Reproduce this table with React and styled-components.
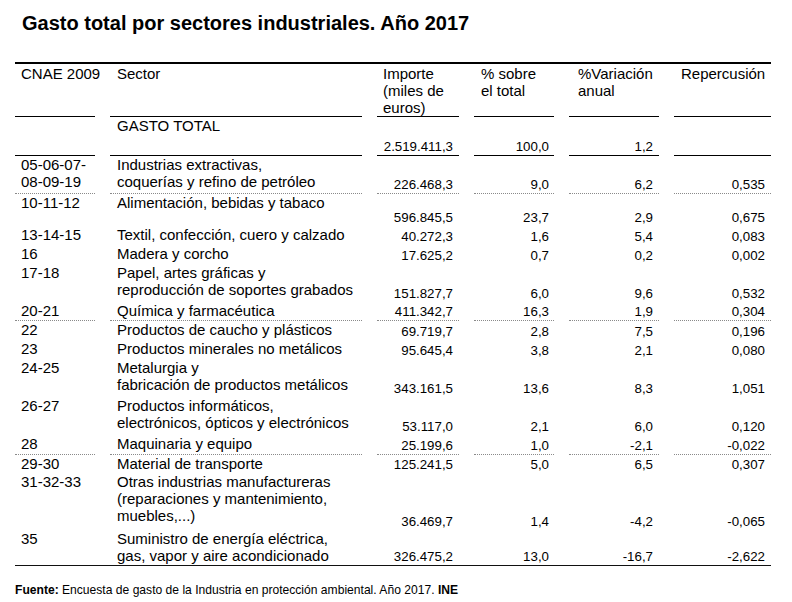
import React from 'react';
import styled, {createGlobalStyle} from 'styled-components';

const GlobalStyle = createGlobalStyle`
  body {
    margin: 0;
    background: #ffffff;
    color: #000000;
    font-family: "Liberation Sans", Arial, sans-serif;
  }
`

const Page = styled.div`
  width: 792px;
  height: 602px;
  padding: 12px 0 0 15px;
  box-sizing: border-box;
  overflow: hidden;
`

const Title = styled.h1`
  margin: 0 0 28px 7px;
  font-size: 20px;
  line-height: 22px;
  font-weight: bold;
`

const Table = styled.div`
  width: 756px;
  border-top: 2px solid #000;
  border-bottom: 1px solid #111;
`

const Row = styled.div`
  display: grid;
  grid-template-columns: 80px 252px 82px 80px 90px 97px;
  column-gap: 15px;
  font-size: 15px;
  line-height: 17px;

  & > div {
    border-bottom: ${props => props.$rule === 'solid' ? '1px solid #000'
            : props.$rule === 'dotted' ? '1px dotted #8a8a8a' : 'none'};
  }
`

const Head = styled.div`
  padding: 1px 0 0 ${props => props.$left || 6}px;
  white-space: nowrap;
`

const Code = styled.div`
  padding: 0 0 ${props => props.$shift}px 6px;
  white-space: nowrap;
`

const Label = styled.div`
  padding: 0 0 ${props => props.$shift}px 7px;
  white-space: nowrap;
`

const Num = styled.div`
  display: flex;
  align-items: flex-end;
  justify-content: flex-end;
  padding-right: ${props => props.$right || 6}px;
  font-size: 13.3px;
`

const Footer = styled.p`
  margin: 17px 0 0 0;
  font-size: 12.1px;
  line-height: 14px;

  b {
    font-weight: bold;
  }
`

const rows = [
    {code: [''], label: ['GASTO TOTAL'], values: ['2.519.411,3', '100,0', '1,2', ''], shift: 21, rule: 'solid'},
    {code: ['05-06-07-', '08-09-19'], label: ['Industrias extractivas,', 'coquerías y refino de petróleo'], values: ['226.468,3', '9,0', '6,2', '0,535'], shift: 3, rule: 'dotted'},
    {code: ['10-11-12'], label: ['Alimentación, bebidas y tabaco'], values: ['596.845,5', '23,7', '2,9', '0,675'], shift: 15},
    {code: ['13-14-15'], label: ['Textil, confección, cuero y calzado'], values: ['40.272,3', '1,6', '5,4', '0,083'], shift: 2},
    {code: ['16'], label: ['Madera y corcho'], values: ['17.625,2', '0,7', '0,2', '0,002'], shift: 2},
    {code: ['17-18'], label: ['Papel, artes gráficas y', 'reproducción de soportes grabados'], values: ['151.827,7', '6,0', '9,6', '0,532'], shift: 4},
    {code: ['20-21'], label: ['Química y farmacéutica'], values: ['411.342,7', '16,3', '1,9', '0,304'], shift: 1, rule: 'dotted'},
    {code: ['22'], label: ['Productos de caucho y plásticos'], values: ['69.719,7', '2,8', '7,5', '0,196'], shift: 2},
    {code: ['23'], label: ['Productos minerales no metálicos'], values: ['95.645,4', '3,8', '2,1', '0,080'], shift: 2},
    {code: ['24-25'], label: ['Metalurgia y', 'fabricación de productos metálicos'], values: ['343.161,5', '13,6', '8,3', '1,051'], shift: 4},
    {code: ['26-27'], label: ['Productos informáticos,', 'electrónicos, ópticos y electrónicos'], values: ['53.117,0', '2,1', '6,0', '0,120'], shift: 4},
    {code: ['28'], label: ['Maquinaria y equipo'], values: ['25.199,6', '1,0', '-2,1', '-0,022'], shift: 2, rule: 'dotted'},
    {code: ['29-30'], label: ['Material de transporte'], values: ['125.241,5', '5,0', '6,5', '0,307'], shift: 1},
    {code: ['31-32-33'], label: ['Otras industrias manufactureras', '(reparaciones y mantenimiento,', 'muebles,...)'], values: ['36.469,7', '1,4', '-4,2', '-0,065'], shift: 6},
    {code: ['35'], label: ['Suministro de energía eléctrica,', 'gas, vapor y aire acondicionado'], values: ['326.475,2', '13,0', '-16,7', '-2,622'], shift: 1},
]

// right padding of each number column, read off the reference
const numPad = [6, 5, 6, 6]

const lines = list => list.map((text, i) => (
    <React.Fragment key={i}>{i > 0 && <br/>}{text}</React.Fragment>
))

export default function App() {
    return (
        <Page>
            <GlobalStyle/>
            <Title>Gasto total por sectores industriales. Año 2017</Title>
            <Table>
                <Row $rule="solid">
                    <Head>CNAE 2009</Head>
                    <Head $left={7}>Sector</Head>
                    <Head>Importe<br/>(miles de<br/>euros)</Head>
                    <Head $left={7}>% sobre<br/>el total</Head>
                    <Head $left={9}>%Variación<br/>anual</Head>
                    <Head $left={7}>Repercusión</Head>
                </Row>
                {rows.map((row, i) => (
                    <Row key={i} $rule={row.rule}>
                        <Code $shift={row.shift}>{lines(row.code)}</Code>
                        <Label $shift={row.shift}>{lines(row.label)}</Label>
                        {row.values.map((value, j) => (
                            <Num key={j} $right={numPad[j]}>{value}</Num>
                        ))}
                    </Row>
                ))}
            </Table>
            <Footer>
                <b>Fuente:</b> Encuesta de gasto de la Industria en protección ambiental. Año 2017. <b>INE</b>
            </Footer>
        </Page>
    )
}
